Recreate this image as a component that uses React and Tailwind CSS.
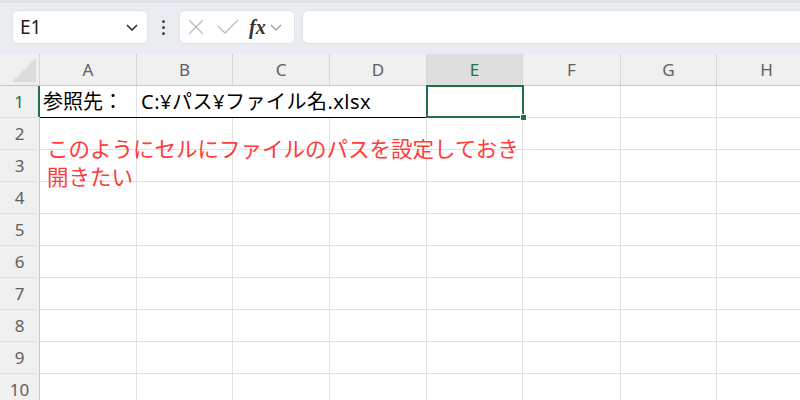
import React from 'react';

const cols = [
    { name: 'A', w: 97 },
    { name: 'B', w: 96 },
    { name: 'C', w: 97 },
    { name: 'D', w: 97 },
    { name: 'E', w: 96 },
    { name: 'F', w: 98 },
    { name: 'G', w: 96 },
    { name: 'H', w: 100 },
];

const rows = [2, 3, 4, 5, 6, 7, 8, 9, 10];

function Toolbar() {
    return (
        <div className="h-[54px] bg-[#e9edf1] border-t-[3px] border-[#dfe4e8] flex items-center pl-[12px] pb-[3px]">
            <div className="w-[136px] h-[34px] bg-white rounded-[6px] border border-[#e0e4e8] flex items-center justify-between pl-[7px] pr-[8px]">
                <span className="text-[19px] text-[#222]">E1</span>
                <svg width="14" height="14" viewBox="0 0 14 14">
                    <path d="M2 5 L7 10 L12 5" fill="none" stroke="#333" strokeWidth="1.6" />
                </svg>
            </div>
            <div className="w-[31px] flex flex-col items-center gap-[3px]">
                <span className="w-[3px] h-[3px] rounded-full bg-[#444]" />
                <span className="w-[3px] h-[3px] rounded-full bg-[#444]" />
                <span className="w-[3px] h-[3px] rounded-full bg-[#444]" />
            </div>
            <div className="w-[116px] h-[34px] bg-white rounded-[6px] border border-[#e0e4e8] flex items-center pl-[7px]">
                <svg width="18" height="18" viewBox="0 0 18 18">
                    <path d="M2 2 L16 16 M16 2 L2 16" stroke="#bdbdbd" strokeWidth="1.4" />
                </svg>
                <svg width="24" height="18" viewBox="0 0 24 18" className="ml-[11px]">
                    <path d="M2 8 L9 15 L22 2" fill="none" stroke="#bdbdbd" strokeWidth="1.4" />
                </svg>
                <span className="ml-[9px] italic font-bold text-[20px] leading-none text-[#333]" style={{ fontFamily: '"Liberation Serif", serif' }}>fx</span>
                <svg width="12" height="12" viewBox="0 0 12 12" className="ml-[4px]">
                    <path d="M1 4 L6 9 L11 4" fill="none" stroke="#999" strokeWidth="1.2" />
                </svg>
            </div>
            <div className="flex-1 h-[34px] ml-[7px] bg-white rounded-l-[6px] border border-r-0 border-[#e0e4e8]" />
        </div>
    );
}

function HeaderRow() {
    return (
        <div className="flex h-[32px] bg-[#f0f0f0] border-b border-[#c8c8c8]">
            <div className="w-[40px] shrink-0 border-r border-[#d6d6d6] relative">
                <svg className="absolute right-[3px] bottom-[3px]" width="24" height="24" viewBox="0 0 24 24">
                    <path d="M24 0 L24 24 L0 24 Z" fill="#dcdcdc" />
                </svg>
            </div>
            {cols.map(c => (
                <div
                    key={c.name}
                    style={{ width: c.w }}
                    className={
                        'shrink-0 flex items-center justify-center border-r border-[#d6d6d6] text-[17px] ' +
                        (c.name === 'E' ? 'bg-[#dedede] text-[#217346]' : 'text-[#606060]')
                    }
                >
                    {c.name}
                </div>
            ))}
        </div>
    );
}

function RowOne() {
    return (
        <div className="flex h-[32px] border-b border-[#e1e1e1]">
            <div className="w-[40px] shrink-0 bg-[#f0f0f0] border-r-2 border-[#217346] flex items-center justify-center text-[17px] text-[#217346]">
                1
            </div>
            <div className="w-[97px] shrink-0 border-r border-[#e1e1e1] relative">
                <div className="absolute left-0 right-[-1px] bottom-[-1px] h-[1px] bg-black" />
                <span className="absolute left-[3px] top-[3px] text-[20px] leading-[26px] text-black whitespace-nowrap">参照先：</span>
            </div>
            <div className="w-[290px] shrink-0 relative">
                <div className="absolute left-0 right-0 bottom-[-1px] h-[1px] bg-black" />
                <span className="absolute left-[4px] top-[3px] text-[20px] leading-[26px] tracking-[0.5px] text-black whitespace-nowrap">C:¥パス¥ファイル名.xlsx</span>
            </div>
            <div className="w-[96px] shrink-0 relative">
                <div className="absolute left-[-1px] top-[-1px] right-[-1px] bottom-[-1px] border-2 border-[#217346]" />
                <div className="absolute right-[-4px] bottom-[-4px] w-[7px] h-[7px] bg-[#217346] border border-white" />
            </div>
            <div className="w-[98px] shrink-0 border-r border-[#e1e1e1]" />
            <div className="w-[96px] shrink-0 border-r border-[#e1e1e1]" />
            <div className="w-[100px] shrink-0 border-r border-[#e1e1e1]" />
        </div>
    );
}

function Row({ n }) {
    return (
        <div className="flex h-[32px] border-b border-[#e1e1e1]">
            <div className="w-[40px] shrink-0 bg-[#f0f0f0] border-r border-[#c8c8c8] flex items-center justify-center text-[17px] text-[#606060]">
                {n}
            </div>
            {cols.map(c => (
                <div key={c.name} style={{ width: c.w }} className="shrink-0 border-r border-[#e1e1e1]" />
            ))}
        </div>
    );
}

export default function App() {
    return (
        <div
            className="w-[800px] h-[400px] overflow-hidden bg-white"
            style={{ fontFamily: '"Noto Sans", "Noto Sans CJK JP", sans-serif' }}
        >
            <Toolbar />
            <div className="relative">
                <HeaderRow />
                <RowOne />
                {rows.map(n => (
                    <Row key={n} n={n} />
                ))}
                <div
                    className="absolute left-[47px] top-[80px] text-[21.5px] leading-[28px] text-[#ff3b3b]"
                    style={{ fontFamily: '"Noto Sans CJK JP", sans-serif' }}
                >
                    <div>このようにセルにファイルのパスを設定しておき</div>
                    <div>開きたい</div>
                </div>
            </div>
        </div>
    );
}
